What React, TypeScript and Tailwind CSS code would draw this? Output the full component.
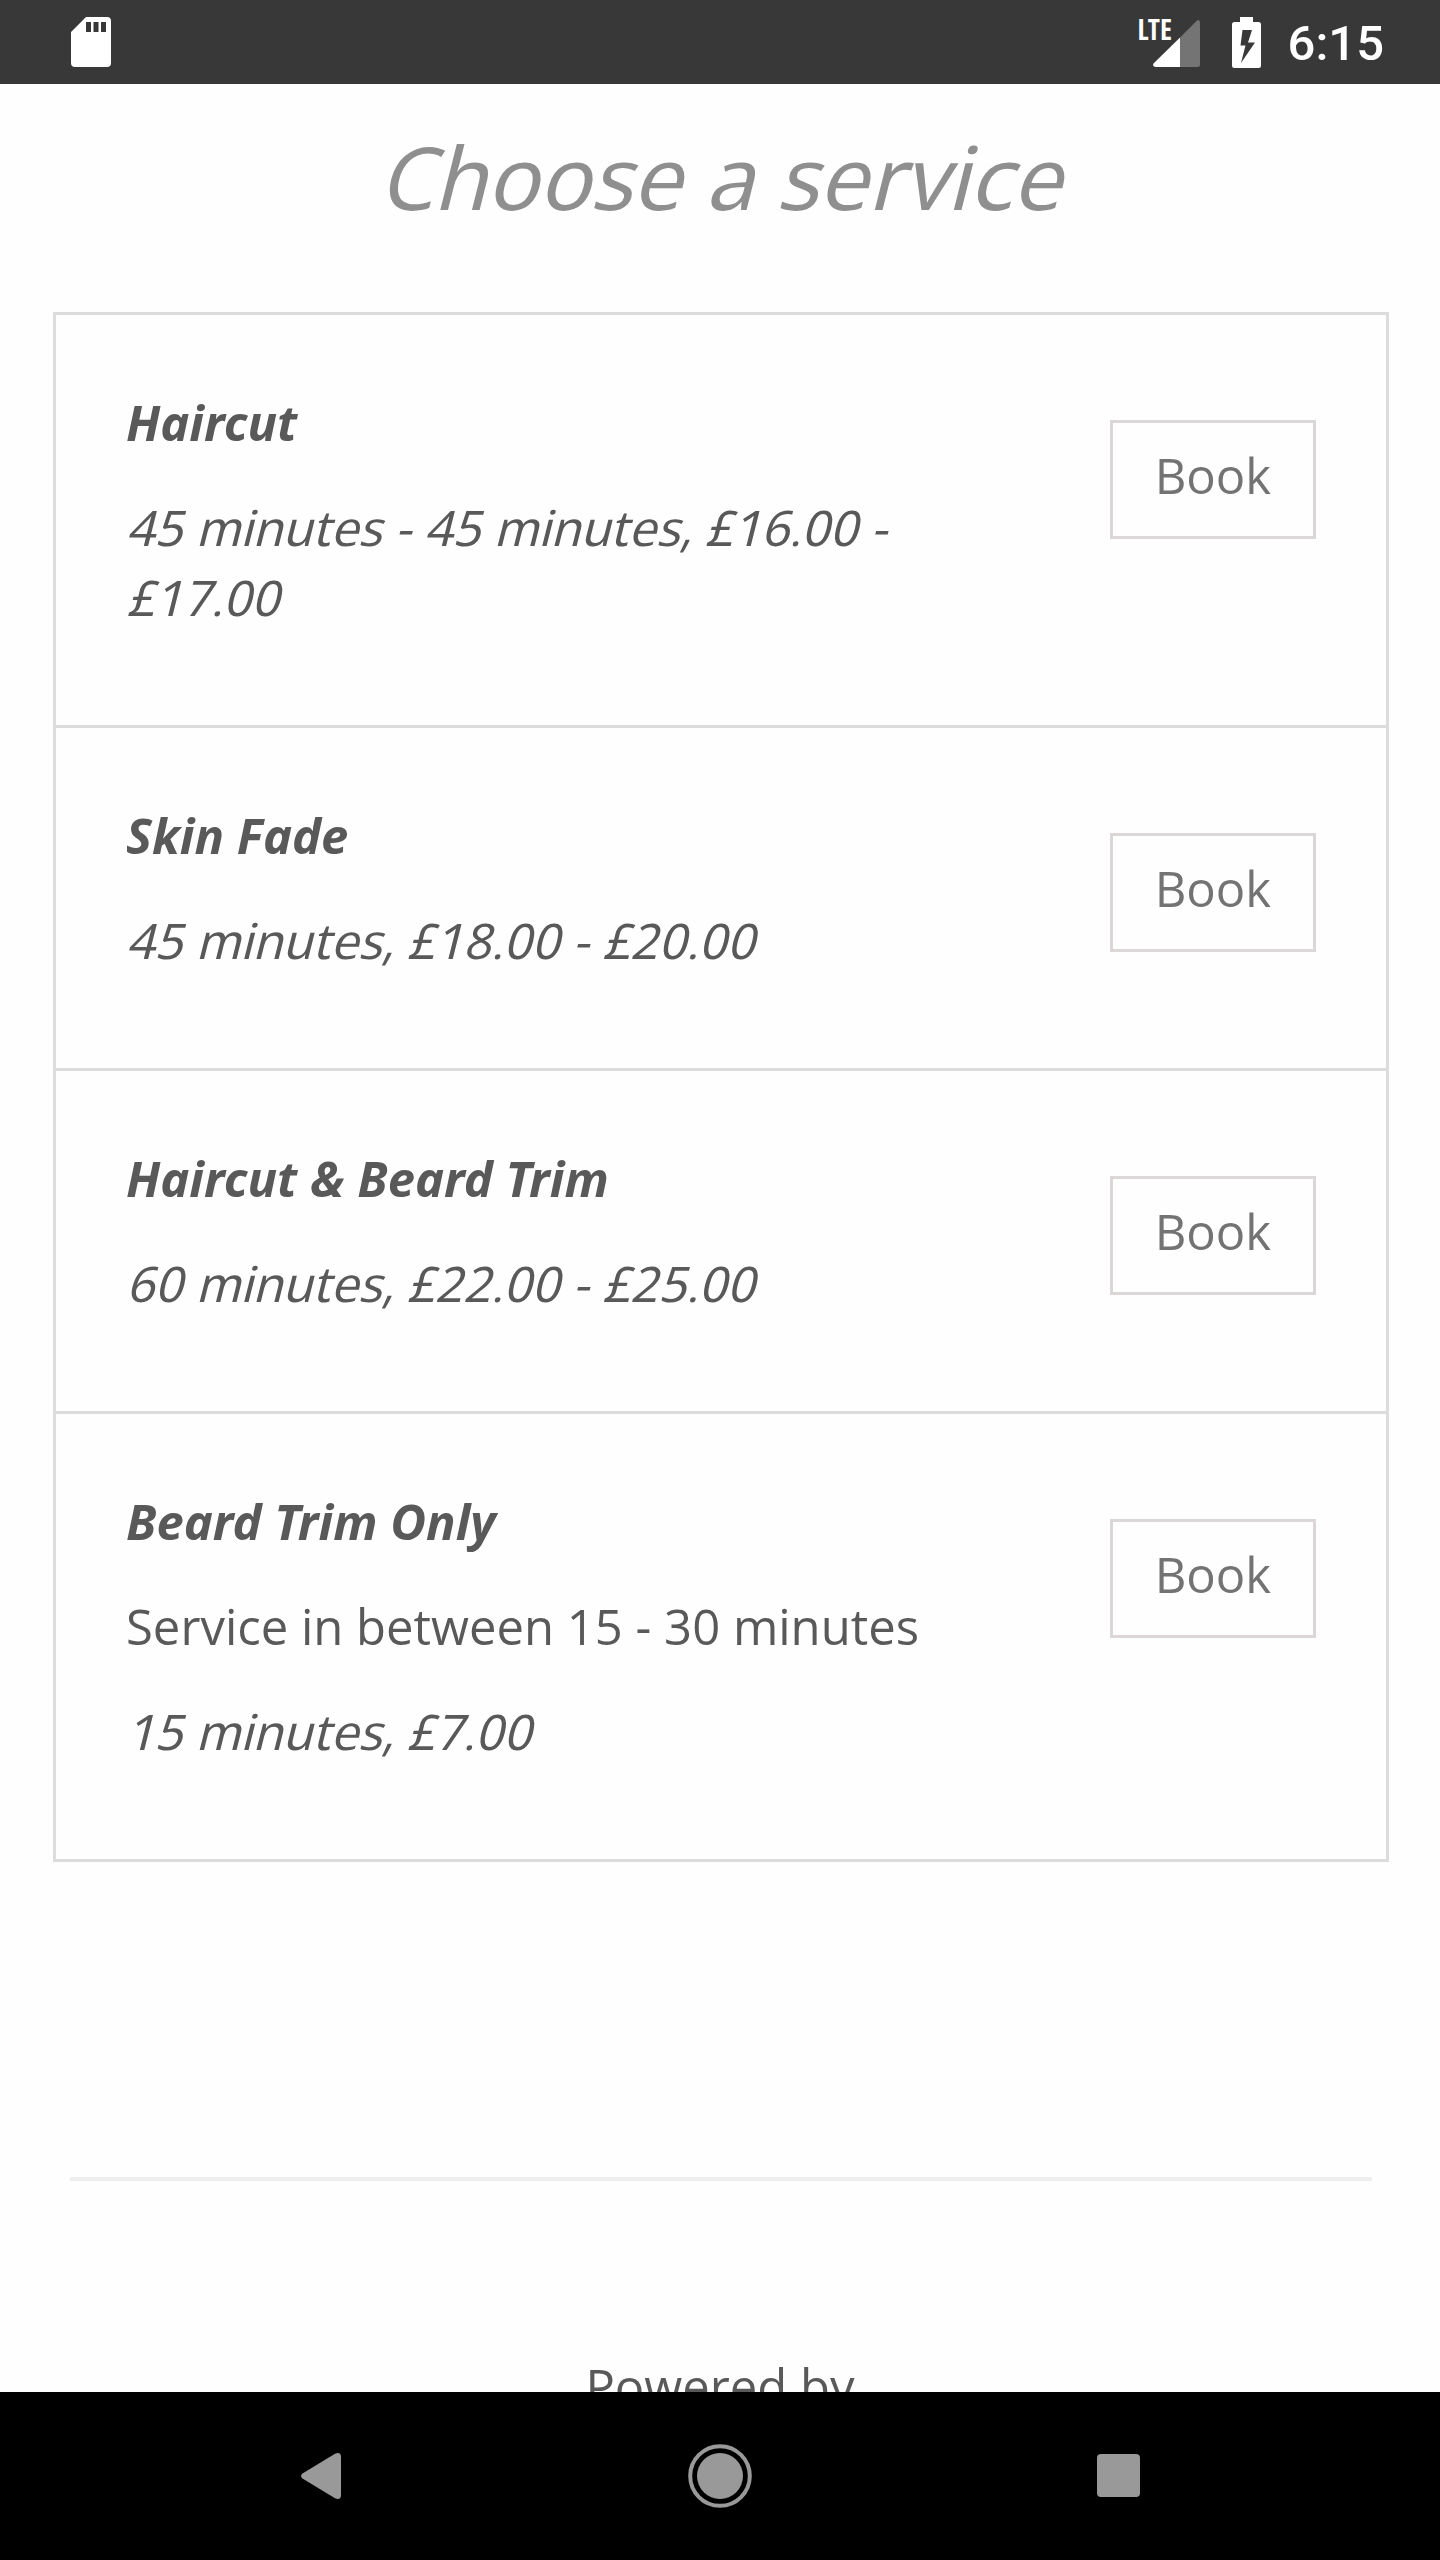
type Service = { name: string; note?: string; price: string };

const services: Service[] = [
  { name: "Haircut", price: "45 minutes - 45 minutes, £16.00 - £17.00" },
  { name: "Skin Fade", price: "45 minutes, £18.00 - £20.00" },
  { name: "Haircut & Beard Trim", price: "60 minutes, £22.00 - £25.00" },
  { name: "Beard Trim Only", note: "Service in between 15 - 30 minutes", price: "15 minutes, £7.00" },
];

function StatusBar() {
  return (
    <header className="flex h-[84px] shrink-0 items-center justify-between bg-[#383838] pr-[56px] pl-[71px] text-white">
      <svg width="40" height="50" viewBox="0 0 40 50" aria-label="SD card">
        <path
          fill="#fff"
          fillRule="evenodd"
          d="M15 0H36a4 4 0 0 1 4 4V46a4 4 0 0 1-4 4H4a4 4 0 0 1-4-4V15ZM15 5V15h5V5ZM22.500 5V15h5V5ZM30 5V15h5V5Z"
        />
      </svg>
      <div className="flex items-center">
        <div className="relative h-[50px] w-[62px]">
          <span className="absolute top-0 left-0 font-['Open_Sans_Condensed','Noto_Sans_CJK_SC',sans-serif] text-[28px] leading-[24px] font-bold">
            LTE
          </span>
          <svg className="absolute right-0 bottom-0" width="47" height="47" viewBox="0 0 47 47" aria-hidden="true">
            <path fill="#747474" d="M27 17.500 43.500 1Q47 -1.500 47 3V44.500Q47 47 44.500 47H27Z" />
            <path fill="#fff" d="M27 17.500V47H2.500Q-1 46.500 .500 43.500Z" />
          </svg>
        </div>
        <svg className="ml-8" width="29" height="51" viewBox="0 0 29 51" aria-label="Battery charging">
          <path
            fill="#fff"
            fillRule="evenodd"
            d="M8 0H21V5H26.500Q29 5 29 7.500V48.500Q29 51 26.500 51H2.500Q0 51 0 48.500V7.500Q0 5 2.500 5H8ZM10.500 13 8.500 28.500H13.500L9 46 23 25.500H16L20 13Z"
          />
        </svg>
        <time className="ml-[27px] pt-1 font-['Roboto',sans-serif] text-[49px] leading-[56px] font-medium">6:15</time>
      </div>
    </header>
  );
}

function ServiceRow({ name, note, price }: Service) {
  return (
    <li className="flex items-start justify-between border-t-[3px] border-[#dcdcdc] px-[70px] pt-[72px] pb-[93px] first:border-t-0">
      <div className="flex max-w-[820px] flex-col gap-[35px]">
        <h2 className="font-['Noto_Sans',sans-serif] font-bold italic">{name}</h2>
        {note && <p>{note}</p>}
        <p className="font-['Noto_Sans_Hebrew','Noto_Sans',sans-serif] italic">{price}</p>
      </div>
      <button
        type="button"
        className="mt-[33px] shrink-0 border-[3px] border-[#dcd7d7] px-[42px] pt-[17px] pb-[26px] text-[#737373]"
      >
        Book
      </button>
    </li>
  );
}

function NavBar() {
  return (
    <nav className="flex h-[168px] shrink-0 items-center justify-center gap-[335px] bg-black text-[#999]">
      <button type="button" aria-label="Back">
        <svg width="64" height="64" viewBox="0 0 64 64" fill="currentColor">
          <path d="M13.500 29.500 46 9.800Q52 7.500 52 13V51Q52 56.500 46 54.200L13.500 34.500Q10.500 32 13.500 29.500Z" />
        </svg>
      </button>
      <button type="button" aria-label="Home">
        <svg width="64" height="64" viewBox="0 0 64 64" fill="currentColor">
          <circle cx="32" cy="32" r="23" />
          <circle cx="32" cy="32" r="29.800" fill="none" stroke="currentColor" strokeWidth="4" />
        </svg>
      </button>
      <button type="button" aria-label="Overview">
        <svg width="64" height="64" viewBox="0 0 64 64" fill="currentColor">
          <rect x="10" y="10" width="43" height="43" rx="4" />
        </svg>
      </button>
    </nav>
  );
}

export default function App() {
  return (
    <div className="flex h-screen flex-col bg-[#fefefe] font-['Open_Sans',sans-serif] text-[49px] leading-[70px] text-[#595959]">
      <StatusBar />
      <main className="min-h-0 flex-1 overflow-hidden pt-[32px]">
        <h1 className="text-center font-['Noto_Sans_Hebrew','Noto_Sans',sans-serif] text-[87px] leading-[120px] text-[#8f8f8f] italic">
          Choose a service
        </h1>
        <ul className="mt-[76px] mr-[51px] ml-[53px] border-[3px] border-[#dcdcdc]">
          {services.map((s) => (
            <ServiceRow key={s.name} {...s} />
          ))}
        </ul>
        <hr className="mr-[68px] ml-[70px] mt-[315px] border-t-4 border-[#eeeeee]" />
        <p className="mt-[170px] text-center">Powered by</p>
      </main>
      <NavBar />
    </div>
  );
}
